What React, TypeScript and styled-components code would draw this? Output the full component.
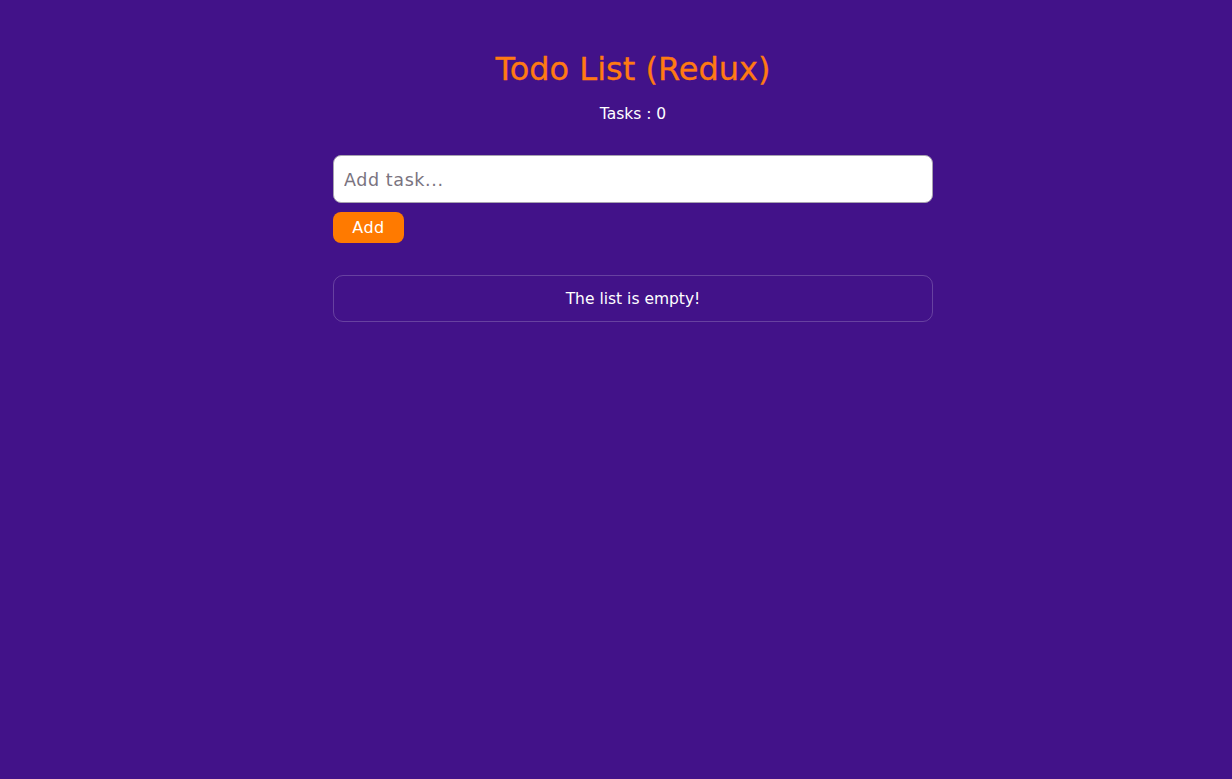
import React, { useState } from "react";
import styled, { createGlobalStyle } from "styled-components";

const GlobalStyle = createGlobalStyle`
  html, body {
    margin: 0;
    padding: 0;
    background: #421289;
    min-height: 100%;
  }
  body {
    font-family: "DejaVu Sans", "Noto Sans", sans-serif;
    color: #ffffff;
  }
  * { box-sizing: border-box; }
`;

const Page = styled.main`
  min-height: 779px;
  background: #421289;
  display: flex;
  justify-content: center;
  padding-top: 46px;
  padding-left: 34px;
`;

const Container = styled.div`
  width: 600px;
  display: flex;
  flex-direction: column;
`;

const Title = styled.h1`
  margin: 0;
  text-align: center;
  color: #ff7a12;
  font-size: 32px;
  font-weight: 400;
  line-height: 46px;
  -webkit-text-stroke: 0.3px #ff7a12;
`;

const Count = styled.p`
  margin: 12px 0 0;
  text-align: center;
  font-size: 15.5px;
  line-height: 20px;
`;

const Form = styled.form`
  margin-top: 31px;
  display: flex;
  flex-direction: column;
  align-items: flex-start;
  gap: 9px;
`;

const Input = styled.input`
  width: 100%;
  height: 48px;
  border: 1px solid #a7a2b0;
  border-radius: 8px;
  padding: 2px 10px 0;
  font-family: inherit;
  font-size: 17.5px;
  letter-spacing: 0.6px;
  color: #333;
  background: #fff;
  outline: none;
  &::placeholder { color: #7a7480; }
`;

const AddButton = styled.button`
  width: 71px;
  height: 31px;
  border: none;
  border-radius: 8px;
  background: #ff7a00;
  color: #fff;
  font-family: inherit;
  font-size: 16px;
  letter-spacing: 0.5px;
  cursor: pointer;
`;

const EmptyBox = styled.div`
  margin-top: 32px;
  height: 47px;
  border: 1px solid rgba(255, 255, 255, 0.2);
  border-radius: 10px;
  display: flex;
  align-items: center;
  justify-content: center;
  font-size: 15.5px;
`;

export default function App() {
  const [text, setText] = useState("");
  return (
    <>
      <GlobalStyle />
      <Page>
        <Container>
          <Title>Todo List (Redux)</Title>
          <Count>Tasks : 0</Count>
          <Form onSubmit={(e) => e.preventDefault()}>
            <Input
              placeholder="Add task..."
              value={text}
              onChange={(e) => setText(e.target.value)}
            />
            <AddButton type="submit">Add</AddButton>
          </Form>
          <EmptyBox>The list is empty!</EmptyBox>
        </Container>
      </Page>
    </>
  );
}
